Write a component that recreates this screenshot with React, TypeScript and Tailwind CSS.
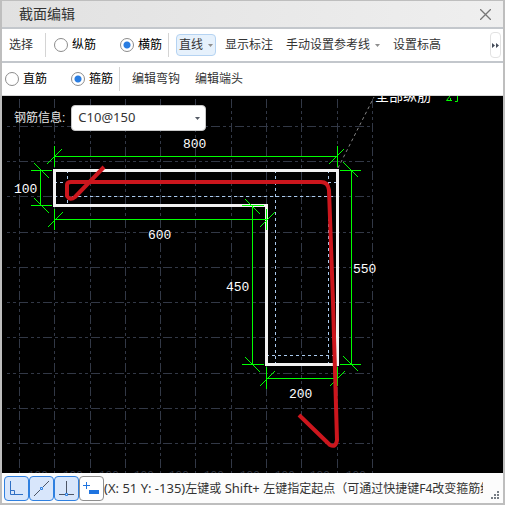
import React, { FC, ReactNode, useState } from 'react'
import { clsx } from 'clsx'

type RadioProps = {
  name: string
  label: string
  checked: boolean
  onChange: () => void
}

const Radio: FC<RadioProps> = ({ name, label, checked, onChange }) => (
  <label className="flex shrink-0 items-center gap-1 whitespace-nowrap text-[12px] leading-4 text-black">
    <input
      type="radio"
      name={name}
      checked={checked}
      onChange={onChange}
      className="h-3.5 w-3.5 appearance-none rounded-full border border-[#8c8c8c] bg-white checked:bg-[radial-gradient(circle,#2a7de1_3px,transparent_4px)]"
    />
    {label}
  </label>
)

const Divider = () => <span className="h-6 w-px shrink-0 bg-[#d4d4d4]" />

type ToolButtonProps = {
  children: ReactNode
  arrow?: boolean
  active?: boolean
}

const ToolButton: FC<ToolButtonProps> = ({ children, arrow, active }) => (
  <button
    type="button"
    className={clsx(
      'flex shrink-0 items-center gap-[5px] whitespace-nowrap text-[12px] leading-4 text-[#333]',
      active && 'h-[22px] rounded-sm border border-[#b5d3f2] bg-[#e6f1fc] px-0.5',
    )}
  >
    {children}
    {arrow && (
      <svg width="5" height="3" viewBox="0 0 5 3" aria-hidden="true">
        <path d="M0 0h5L2.500 3z" fill="#8e8e8e" />
      </svg>
    )}
  </button>
)

const SnapButton: FC<{ label: string; on?: boolean; children: ReactNode }> = ({
  label,
  on,
  children,
}) => (
  <button
    type="button"
    aria-label={label}
    className={clsx(
      'flex h-[25px] w-[25px] shrink-0 items-center justify-center rounded-sm border',
      on ? 'border-[#2f80e0] bg-[#d8e6fb]' : 'border-[#8e8e8e] bg-white',
    )}
  >
    <svg width="19" height="19" viewBox="0 0 19 19" fill="none">
      {children}
    </svg>
  </button>
)

const columns = [19, 54, 90, 125, 160, 195, 231, 266, 301, 337, 372]
const rows = [126, 161, 196, 232, 267, 302, 337, 373, 408, 443]

const Drawing = () => (
  <svg
    className="block w-full"
    viewBox="2 96 501 377"
    fill="none"
    fontFamily="'Liberation Mono', 'Noto Sans CJK SC', monospace"
  >
    <g stroke="#323846" strokeDasharray="9 3 3 3 3 3" shapeRendering="crispEdges">
      {columns.map((x) => (
        <path key={x} d={`M${x + 0.5} 99V473`} />
      ))}
      {rows.map((y) => (
        <path key={y} d={`M5 ${y + 0.5}H373`} strokeDashoffset="10" />
      ))}
    </g>
    <g fill="#323846" fontSize="11">
      {columns.slice(0, -1).map((x) => (
        <text key={x} x={x + 9} y="478">
          100
        </text>
      ))}
    </g>

    <path d="M338 168L374 97" stroke="#858585" strokeDasharray="3 3" />
    <g stroke="#a9c9ec" strokeDasharray="3 3" shapeRendering="crispEdges">
      <path d="M54 196.500H338M67.500 170V206M54 182.500H68M275.500 170V364M328.500 170V364M328 182.500H338M266 355.500H338" />
    </g>

    <path
      d="M54.500 170.500H337.500V364.500H266.500V205.500H54.500Z"
      stroke="#f2f2f2"
      strokeWidth="3"
      shapeRendering="crispEdges"
    />

    {/* dimension lines */}
    <g stroke="#00ff00" shapeRendering="crispEdges">
      <path d="M54 156.500H338M54.500 146V167M337.500 146V167" />
      <path d="M47 164L62 149M329 164L344 149" />
      <path d="M54 219.500H267M54.500 209V230M266.500 209V230" />
      <path d="M48 227L63 212M260 227L275 212" />
      <path d="M40.500 170V206M31 170.500H52M31 205.500H52" />
      <path d="M34 163L49 178M34 198L49 213" />
      <path d="M252.500 205V365M242 205.500H264M242 364.500H264" />
      <path d="M245 199L260 214M245 357L260 372" />
      <path d="M351.500 170V365M340 170.500H361M340 364.500H361" />
      <path d="M343 162L358 177M343 356L358 371" />
      <path d="M266 378.500H338M266.500 367V389M337.500 367V386" />
      <path d="M260 386L275 371M330 386L345 371" />
    </g>

    <path
      d="M104 167L75 197Q70 201 67 196V185Q67 182 71 182H321Q328 182 329 190L333 302L337 440Q336 448 330 445L299 415"
      stroke="#cc161d"
      strokeWidth="4"
      strokeLinejoin="round"
    />

    <g fill="#fff" fontSize="13">
      <text x="183" y="148">800</text>
      <text x="14" y="193">100</text>
      <text x="148" y="239">600</text>
      <text x="226" y="291">450</text>
      <text x="353" y="273">550</text>
      <text x="289" y="398">200</text>
      <text x="375" y="101" fontSize="14">全部纵筋</text>
    </g>
    <path
      d="M450 96L446.500 100.500H452M450.500 98V101M457.500 96V101.500H455"
      stroke="#00ff00"
    />
  </svg>
)

const App = () => {
  const [direction, setDirection] = useState<string>('横筋')
  const [kind, setKind] = useState<string>('箍筋')

  return (
    <main className="overflow-hidden border-2 border-t border-[#bebebe] bg-[#fcfcfc] font-['Liberation_Sans','Noto_Sans_CJK_SC',sans-serif] text-[12px] text-[#333]">
      <header className="flex h-[26px] items-center justify-between bg-linear-to-r from-[#e1e1e1] to-[#efefef] pr-3 pl-[17px]">
        <h1 className="text-[14px] leading-5">截面编辑</h1>
        <button type="button" aria-label="关闭">
          <svg width="11" height="11" viewBox="0 0 11 11">
            <path d="M0 0L11 11M11 0L0 11" stroke="#777" strokeWidth="1.300" />
          </svg>
        </button>
      </header>

      <div className="flex h-9 items-center border-y-2 border-[#c3c7cc] bg-white pr-0.5 pl-[7px]">
        <ToolButton>选择</ToolButton>
        <span className="w-3 shrink-0" />
        <Divider />
        <div className="flex gap-6 pr-1.5 pl-2">
          {['纵筋', '横筋'].map((item) => (
            <Radio
              key={item}
              name="direction"
              label={item}
              checked={direction === item}
              onChange={() => setDirection(item)}
            />
          ))}
        </div>
        <Divider />
        <div className="flex grow items-center gap-[9px] pl-[7px]">
          <ToolButton arrow active>
            直线
          </ToolButton>
          <div className="flex gap-[13px]">
            <ToolButton>显示标注</ToolButton>
            <ToolButton arrow>手动设置参考线</ToolButton>
            <ToolButton>设置标高</ToolButton>
          </div>
        </div>
        <button
          type="button"
          aria-label="更多"
          className="flex h-[26px] w-[11px] shrink-0 items-center justify-center rounded-sm border border-[#e2e2e2]"
        >
          <svg width="7" height="5" viewBox="0 0 7 5">
            <path d="M0 0L3 2.500L0 5zM4 0L7 2.500L4 5z" fill="#444b58" />
          </svg>
        </button>
      </div>

      <div className="flex h-[33px] items-center border-b border-[#d8d8d8] bg-white pl-[3px]">
        <div className="flex gap-6 pr-1.5">
          {['直筋', '箍筋'].map((item) => (
            <Radio
              key={item}
              name="kind"
              label={item}
              checked={kind === item}
              onChange={() => setKind(item)}
            />
          ))}
        </div>
        <Divider />
        <div className="flex gap-[15px] pl-3">
          <ToolButton>编辑弯钩</ToolButton>
          <ToolButton>编辑端头</ToolButton>
        </div>
      </div>

      <section className="relative bg-black">
        <Drawing />
        <div className="absolute top-[9px] left-3 flex items-center gap-1.5">
          <label htmlFor="rebar" className="text-[12px] text-[#e6e6e6]">
            钢筋信息:
          </label>
          <div className="relative">
            <select
              id="rebar"
              className="h-[26px] w-[135px] appearance-none rounded-sm border border-[#c8c8c8] bg-white pl-1.5 font-['Noto_Sans',sans-serif] text-[13px] text-[#333]"
            >
              <option>C10@150</option>
            </select>
            <svg
              className="pointer-events-none absolute top-3 right-1.5"
              width="5"
              height="3"
              viewBox="0 0 5 3"
            >
              <path d="M0 0h5L2.500 3z" fill="#555b66" />
            </svg>
          </div>
        </div>
      </section>

      <footer className="flex h-[30px] items-center bg-[#fcfcfc] pr-1 pl-0.5">
        <SnapButton label="正交" on>
          <path d="M3.500 2V15.500H16M3.500 11.500H7.500V15.500" stroke="#2f6fc4" />
        </SnapButton>
        <SnapButton label="中点" on>
          <path d="M2 17L8 11M11 8L17 2" stroke="#4c5566" />
          <path d="M8.500 8.500h2v2h-2z" stroke="#2f80e0" />
        </SnapButton>
        <SnapButton label="垂点" on>
          <path d="M9.500 2V14M2 15.500H8M11 15.500H17" stroke="#4c5566" />
          <path d="M8.500 14.500h2v2h-2z" stroke="#2f80e0" />
        </SnapButton>
        <SnapButton label="动态输入">
          <path d="M4.500 3V10M1 6.500H8" stroke="#1f74e0" />
          <path d="M7 11h10v4H7z" fill="#1f74e0" />
        </SnapButton>
        <p className="min-w-0 grow overflow-hidden whitespace-nowrap font-['Noto_Sans','Noto_Sans_CJK_SC',sans-serif] leading-5">
          <span className="text-[13px]">(X: 51 Y: -135)</span>
          左键或
          <span className="text-[13px]"> Shift+ </span>
          左键指定起点（可通过快捷键F4改变箍筋绘制方向）
        </p>
        <svg
          className="mb-1 ml-2 shrink-0 self-end"
          width="8"
          height="8"
          viewBox="0 0 8 8"
        >
          <path
            d="M6 0h2v2H6zM3 3h2v2H3zM6 3h2v2H6zM0 6h2v2H0zM3 6h2v2H3zM6 6h2v2H6z"
            fill="#777d84"
          />
        </svg>
      </footer>
    </main>
  )
}

export default App
